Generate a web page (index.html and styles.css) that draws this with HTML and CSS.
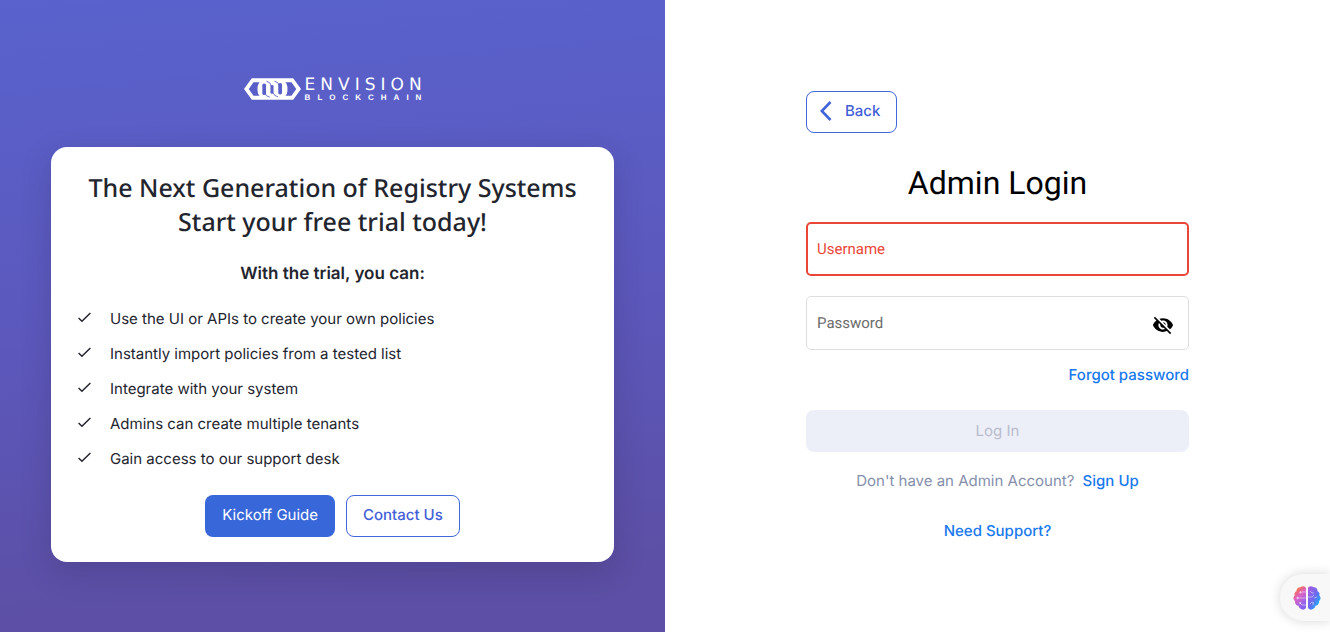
FILE: index.html
```html
<!DOCTYPE html>
<html lang="en">
<head>
<meta charset="utf-8">
<title>Admin Login</title>
<link rel="stylesheet" href="styles.css">
</head>
<body>
<main class="page">
  <section class="promo">
    <div class="logo">
      <svg class="logo-mark" width="57" height="22" viewBox="0 0 168 64" aria-hidden="true">
        <path fill="#fff" fill-rule="evenodd" d="M0 32L23 0h122l23 32-23 32H23zM14 32l14 20h18q-6-6-6-14V26q0-8 6-14H28zM154 32l-14-20h-18q6 6 6 14v12q0 8-6 14h18z"/>
        <g fill="#5960c9">
          <rect x="54" y="16" width="11" height="34" rx="5"/>
          <rect x="78" y="20" width="9" height="26" rx="4"/>
          <rect x="101" y="14" width="11" height="34" rx="5"/>
        </g>
        <g fill="none" stroke="#5960c9" stroke-width="2.500">
          <path d="M66 9q12 2 14 14M90 9q12 2 14 14M62 44q2 10 14 12M86 43q2 10 14 12"/>
        </g>
      </svg>
      <div class="logo-text">
        <span class="logo-name">ENVISION</span>
        <span class="logo-sub">BLOCKCHAIN</span>
      </div>
    </div>
    <div class="card">
      <h2 class="card-title">The Next Generation of Registry Systems<br>Start your free trial today!</h2>
      <p class="card-lead">With the trial, you can:</p>
      <ul class="benefits">
        <li><svg class="check" viewBox="0 0 14 14"><path d="M1.500 7.500L4.600 10.500L12.500 2.800"/></svg>Use the UI or APIs to create your own policies</li>
        <li><svg class="check" viewBox="0 0 14 14"><path d="M1.500 7.500L4.600 10.500L12.500 2.800"/></svg>Instantly import policies from a tested list</li>
        <li><svg class="check" viewBox="0 0 14 14"><path d="M1.500 7.500L4.600 10.500L12.500 2.800"/></svg>Integrate with your system</li>
        <li><svg class="check" viewBox="0 0 14 14"><path d="M1.500 7.500L4.600 10.500L12.500 2.800"/></svg>Admins can create multiple tenants</li>
        <li><svg class="check" viewBox="0 0 14 14"><path d="M1.500 7.500L4.600 10.500L12.500 2.800"/></svg>Gain access to our support desk</li>
      </ul>
      <div class="card-actions">
        <button class="btn btn-solid" type="button">Kickoff Guide</button>
        <button class="btn btn-outline" type="button">Contact Us</button>
      </div>
    </div>
  </section>

  <section class="login">
    <form class="login-form">
      <button class="btn btn-outline btn-back" type="button">
        <svg width="12" height="20" viewBox="0 0 12 20" aria-hidden="true"><path d="M10.500 1L1.800 10l8.700 9"/></svg>
        Back
      </button>
      <h1 class="login-title">Admin Login</h1>
      <div class="field field-error">
        <input class="field-input" id="username" type="text">
        <label class="field-label" for="username">Username</label>
      </div>
      <div class="field">
        <input class="field-input" id="password" type="password">
        <label class="field-label" for="password">Password</label>
        <button class="toggle" type="button" aria-label="Show password">
          <svg width="22" height="22" viewBox="0 0 24 24" aria-hidden="true"><path d="M12 7c2.760 0 5 2.240 5 5 0 .65-.13 1.260-.36 1.830l2.920 2.920c1.510-1.260 2.700-2.890 3.430-4.750-1.730-4.390-6-7.500-11-7.500-1.400 0-2.740.25-3.980.7l2.160 2.160C10.740 7.130 11.350 7 12 7zM2 4.270l2.280 2.280.46.46C3.080 8.300 1.780 10.020 1 12c1.730 4.390 6 7.500 11 7.500 1.550 0 3.030-.3 4.380-.84l.42.42L19.730 22 21 20.730 3.270 3 2 4.270zM7.530 9.800l1.550 1.550c-.05.21-.08.43-.08.650 0 1.660 1.340 3 3 3 .22 0 .44-.03.65-.08l1.550 1.550c-.67.33-1.410.53-2.200.53-2.760 0-5-2.240-5-5 0-.79.2-1.530.53-2.200zm4.310-.78l3.150 3.150.02-.16c0-1.660-1.340-3-3-3l-.17.010z"/></svg>
        </button>
      </div>
      <a class="link forgot" href="#forgot">Forgot password</a>
      <button class="btn btn-submit" type="submit" disabled>Log In</button>
      <p class="signup">Don't have an Admin Account? <a class="link" href="#signup">Sign Up</a></p>
      <a class="link support" href="#support">Need Support?</a>
    </form>
  </section>
</main>

<button class="assistant" type="button" aria-label="Assistant">
  <svg width="28" height="26" viewBox="0 0 28 26" aria-hidden="true">
    <defs>
      <linearGradient id="left" x1="0" y1="0" x2=".5" y2="1">
        <stop offset="0" stop-color="#f6a52c"/><stop offset=".1" stop-color="#f6962c"/><stop offset=".3" stop-color="#ee6a72"/>
        <stop offset=".5" stop-color="#dc63c4"/><stop offset="1" stop-color="#8a62f0"/>
      </linearGradient>
      <linearGradient id="right" x1="0" y1="0" x2="1" y2="1">
        <stop offset="0" stop-color="#b05be0"/><stop offset=".5" stop-color="#6a6af0"/>
        <stop offset=".85" stop-color="#16b4fa"/>
      </linearGradient>
    </defs>
    <path fill="url(#left)" d="M13 3.500C13 1 9 .5 7.500 2.300 5 2 3.200 4 3.500 6.200 1.500 7 1 9 1.800 10.600-.2 12 .2 15 2 16c-.4 2.500 1.300 4.500 3.500 4.800C6.300 25 12 26 13 22.500z"/>
    <path fill="url(#right)" d="M15 3.500C15 1 19 .5 20.500 2.300 23 2 24.800 4 24.500 6.200 26.500 7 27 9 26.200 10.600c2 1.400 1.600 4.400-.2 5.400.4 2.500-1.300 4.500-3.500 4.800C21.700 25 16 26 15 22.500z"/>
    <g fill="none" stroke="#fff" stroke-opacity=".6" stroke-width=".8">
      <path d="M13 7H9M4 13h9M13 20H9l-2-2M8 6l-1 2M15 12h4l2-2M17 6l2 2h2M21 13l3-1M17 19l2-2M19 17l2 1M20 20v-2"/>
      <circle cx="7.500" cy="7.500" r=".8"/><circle cx="4.500" cy="13" r=".8"/><circle cx="7" cy="18" r=".8"/>
    </g>
  </svg>
</button>
</body>
</html>
```
FILE: styles.css
```css
* { box-sizing: border-box; }

body {
  margin: 0;
  font-family: Inter, "Liberation Sans", sans-serif;
  font-size: 15px;
  line-height: 20px;
  color: #23252e;
  background: #fff;
  text-rendering: geometricPrecision;
}

button, input {
  font: inherit;
  text-rendering: inherit;
}

.page {
  display: grid;
  grid-template-columns: 1fr 1fr;
  min-height: 100vh;
}

.promo {
  display: flex;
  flex-direction: column;
  align-items: center;
  gap: 46px;
  padding: 77px 51px 48px;
  background: linear-gradient(175deg, #5962cd 0%, #5c58bc 50%, #5c4fa5 90%);
}

.logo {
  display: flex;
  align-items: center;
  gap: 4px;
  height: 24px;
  color: #fff;
}

.logo-text {
  display: flex;
  flex-direction: column;
  margin-right: -7px;
  padding-top: 2px;
}

.logo-name {
  font: 400 17px/15px "DejaVu Sans", sans-serif;
  letter-spacing: 5px;
}

.logo-sub {
  font: 700 8px/9px "Liberation Sans", sans-serif;
  letter-spacing: 7px;
}

.card {
  width: 100%;
  padding: 24px 26px 25px;
  border-radius: 16px;
  background: #fff;
  box-shadow: 0 10px 30px rgba(40, 30, 70, .22);
}

.card-title {
  margin: 0 0 24px;
  font: 500 25px/34px "Noto Sans", sans-serif;
  text-align: center;
}

.card-lead {
  margin: 0 0 24px;
  font-size: 17px;
  font-weight: 600;
  line-height: 22px;
  text-align: center;
}

.benefits {
  display: flex;
  flex-direction: column;
  gap: 15px;
  margin: 0;
  padding: 0;
  list-style: none;
}

.benefits li {
  display: flex;
  gap: 18px;
}

.check {
  width: 15px;
  height: 15px;
  margin-top: 1px;
  fill: none;
  stroke: #23252e;
  stroke-width: 1.4;
}

.card-actions {
  display: flex;
  justify-content: center;
  gap: 11px;
  margin-top: 26px;
}

.btn {
  height: 42px;
  padding: 0 16px 2px;
  border: 1px solid transparent;
  border-radius: 8px;
  font-weight: 500;
}

.btn-solid {
  background: #3867d9;
  color: #fff;
  font-weight: 400;
}

.btn-outline {
  border-color: #4268dc;
  background: #fff;
  color: #4460d8;
}

.login {
  display: flex;
  justify-content: center;
  padding: 91px 24px 48px;
}

.login-form {
  display: flex;
  flex-direction: column;
  width: 100%;
  max-width: 383px;
}

.btn-back {
  display: flex;
  align-items: center;
  align-self: flex-start;
  gap: 13px;
  padding-left: 13px;
}

.btn-back svg {
  fill: none;
  stroke: #4064da;
  stroke-width: 2.6;
}

.login-title {
  margin: 30px 0 19px;
  font: 400 32px/40px Roboto, sans-serif;
  text-align: center;
  color: #000;
}

.field {
  position: relative;
  height: 54px;
  margin-bottom: 20px;
  border: 1px solid #dedede;
  border-radius: 5px;
  font-family: Roboto, sans-serif;
  color: #6b6b6b;
}

.field-error {
  border: 2px solid #ea4637;
  color: #ea4637;
}

.field-input {
  width: 100%;
  height: 100%;
  padding: 0 48px 0 10px;
  border: 0;
  outline: 0;
  background: transparent;
}

.field-label {
  position: absolute;
  top: 16px;
  left: 10px;
  pointer-events: none;
}

.field-error .field-label {
  top: 15px;
  left: 9px;
}

.toggle {
  position: absolute;
  top: 17px;
  right: 14px;
  display: flex;
  padding: 0;
  border: 0;
  background: none;
}

.link {
  font-weight: 500;
  color: #1779ee;
  text-decoration: none;
}

.forgot {
  align-self: flex-end;
  margin: -5px 0 25px;
}

.btn-submit {
  padding-bottom: 0;
  background: #eceff8;
  color: #b9bccc;
  font-weight: 400;
}

.signup {
  margin: 19px 0 30px;
  text-align: center;
  color: #8690ac;
}

.signup .link { margin-left: 4px; }

.support { align-self: center; }

.assistant {
  position: fixed;
  right: 0;
  bottom: 11px;
  display: flex;
  align-items: center;
  width: 50px;
  height: 47px;
  padding: 0 0 0 13px;
  border: 0;
  border-radius: 24px 0 0 24px;
  background: #f8f8f8;
  box-shadow: 0 0 12px rgba(0, 0, 0, .16);
}
```
